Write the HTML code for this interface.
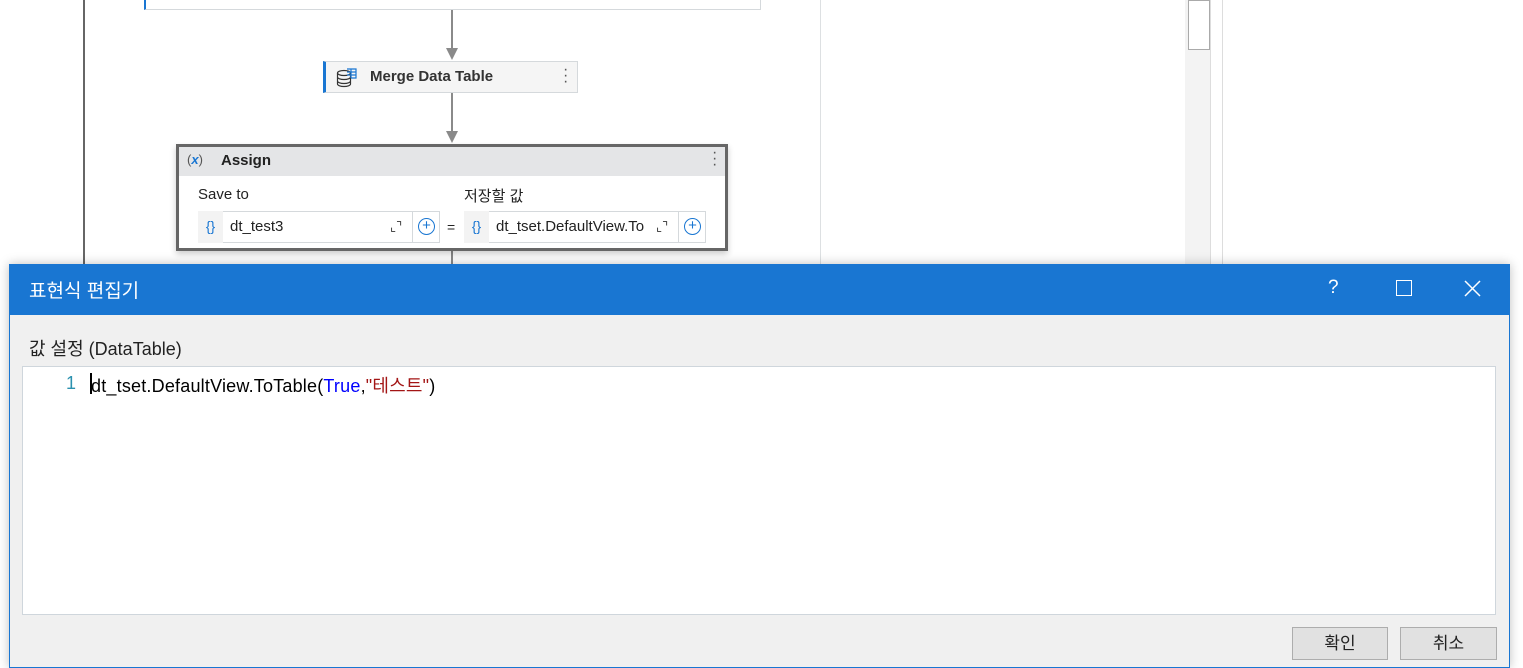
<!DOCTYPE html>
<html><head><meta charset="utf-8"><style>
*{box-sizing:border-box;margin:0;padding:0}
body{width:1523px;height:668px;position:relative;overflow:hidden;background:#fff;font-family:"Liberation Sans","Noto Sans CJK KR",sans-serif;color:#222}
.a{position:absolute}
</style></head><body>
<div class="a" style="left:83px;top:0;width:2px;height:668px;background:#666"></div>
<div class="a" style="left:144px;top:0;width:617px;height:10px;border:1px solid #d5d9dc;border-top:none;border-left:2px solid #1976d2;background:#fff"></div>
<div class="a" style="left:820px;top:0;width:1px;height:268px;background:#dde0e2"></div>
<div class="a" style="left:1185px;top:0;width:26px;height:268px;background:#f3f3f3;border-right:1px solid #ddd"></div>
<div class="a" style="left:1188px;top:0;width:22px;height:50px;background:#fff;border:1px solid #aaa"></div>
<div class="a" style="left:1222px;top:0;width:1px;height:268px;background:#ddd"></div>
<div class="a" style="left:451px;top:10px;width:2px;height:40px;background:#8a8a8a"></div>
<div class="a" style="left:446px;top:48px;width:0;height:0;border-left:6px solid transparent;border-right:6px solid transparent;border-top:12px solid #8a8a8a"></div>
<div class="a" style="left:451px;top:93px;width:2px;height:40px;background:#8a8a8a"></div>
<div class="a" style="left:446px;top:131px;width:0;height:0;border-left:6px solid transparent;border-right:6px solid transparent;border-top:12px solid #8a8a8a"></div>
<div class="a" style="left:451px;top:250px;width:2px;height:16px;background:#8a8a8a"></div>
<div class="a" style="left:323px;top:61px;width:255px;height:32px;background:#f5f5f5;border:1px solid #d5d9dc;border-left:3px solid #1976d2"></div>
<svg class="a" style="left:335px;top:67px" width="24" height="22" viewBox="0 0 24 22"><g fill="none" stroke="#333" stroke-width="1.2"><ellipse cx="9" cy="6" rx="6.5" ry="2.5"/><path d="M2.5 6v11c0 1.4 3 2.5 6.5 2.5s6.5-1.1 6.5-2.5V6M2.5 10c0 1.4 3 2.5 6.5 2.5s6.5-1.1 6.5-2.5M2.5 14c0 1.4 3 2.5 6.5 2.5s6.5-1.1 6.5-2.5"/><path d="M12 2h9v9h-5M12 5h9M12 8h9M16 2v9" stroke="#1976d2"/></g></svg>
<div class="a" style="left:370px;top:68px;font-size:15px;font-weight:bold;color:#333">Merge Data Table</div>
<div class="a" style="left:563px;top:67px;font-size:16px;line-height:6px;color:#555">·<br>·<br>·</div>
<div class="a" style="left:176px;top:144px;width:552px;height:107px;border:3px solid #666;background:#fff;box-shadow:0 3px 6px rgba(0,0,0,.2)"></div>
<div class="a" style="left:179px;top:147px;width:546px;height:29px;background:#e4e5e7"></div>
<div class="a" style="left:187px;top:152px;font-size:13px;color:#555">(<span style="color:#1976d2;font-style:italic;font-weight:bold">x</span>)</div>
<div class="a" style="left:221px;top:152px;font-size:15px;font-weight:bold;color:#222">Assign</div>
<div class="a" style="left:712px;top:150px;font-size:16px;line-height:6px;color:#555">·<br>·<br>·</div>
<div class="a" style="left:198px;top:186px;font-size:15px">Save to</div>
<div class="a" style="left:464px;top:185px;font-size:15px">저장할 값</div>
<div class="a" style="left:198px;top:211px;width:242px;height:32px;border:1px solid #d5d9dc;background:#fff"></div>
<div class="a" style="left:198px;top:211px;width:25px;height:32px;background:#f3f3f3;color:#1976d2;font-size:14px;line-height:30px;text-align:center">{}</div>
<div class="a" style="left:230px;top:218px;font-size:15px">dt_test3</div>
<div class="a" style="left:390px;top:219px;font-size:13px;color:#333">⌞⌝</div>
<div class="a" style="left:412px;top:211px;width:1px;height:32px;background:#d5d9dc"></div>
<div class="a" style="left:418px;top:218px;width:17px;height:17px;border:1.5px solid #1976d2;border-radius:50%;color:#1976d2;font-size:15px;line-height:14px;text-align:center">+</div>
<div class="a" style="left:447px;top:219px;font-size:14px">=</div>
<div class="a" style="left:464px;top:211px;width:242px;height:32px;border:1px solid #d5d9dc;background:#fff;overflow:hidden"></div>
<div class="a" style="left:464px;top:211px;width:25px;height:32px;background:#f3f3f3;color:#1976d2;font-size:14px;line-height:30px;text-align:center">{}</div>
<div class="a" style="left:496px;top:218px;width:148px;overflow:hidden;white-space:nowrap;font-size:15px">dt_tset.DefaultView.ToTable</div>
<div class="a" style="left:656px;top:219px;font-size:13px;color:#333">⌞⌝</div>
<div class="a" style="left:678px;top:211px;width:1px;height:32px;background:#d5d9dc"></div>
<div class="a" style="left:684px;top:218px;width:17px;height:17px;border:1.5px solid #1976d2;border-radius:50%;color:#1976d2;font-size:15px;line-height:14px;text-align:center">+</div>
<div class="a" style="left:9px;top:264px;width:1501px;height:404px;background:#f0f0f0;border:1px solid #1976d2;box-shadow:0 0 10px rgba(0,0,0,.25)"></div>
<div class="a" style="left:9px;top:264px;width:1501px;height:51px;background:#1976d2"></div>
<div class="a" style="left:29px;top:276px;font-size:19px;color:#fff">표현식 편집기</div>
<div class="a" style="left:1328px;top:277px;font-size:19px;color:#fff">?</div>
<div class="a" style="left:1396px;top:280px;width:16px;height:16px;border:1.5px solid #fff"></div>
<svg class="a" style="left:1464px;top:280px" width="17" height="17"><path d="M1 1L16 16M16 1L1 16" stroke="#fff" stroke-width="1.5"/></svg>
<div class="a" style="left:29px;top:335px;font-size:18px;color:#222">값 설정 (DataTable)</div>
<div class="a" style="left:22px;top:366px;width:1474px;height:249px;background:#fff;border:1px solid #cfd6dc"></div>
<div class="a" style="left:66px;top:373px;font-size:18px;color:#2b91af">1</div>
<div class="a" style="left:90px;top:373px;width:2px;height:21px;background:#000"></div>
<div class="a" style="left:91px;top:372px;font-size:18px;color:#000;white-space:nowrap;letter-spacing:0.2px">dt_tset.DefaultView.ToTable(<span style="color:#0000ff">True</span>,<span style="color:#a31515">"테스트"</span>)</div>
<div class="a" style="left:1292px;top:627px;width:96px;height:33px;border:1px solid #adadad;background:#e1e1e1;font-size:17px;text-align:center;line-height:31px">확인</div>
<div class="a" style="left:1400px;top:627px;width:97px;height:33px;border:1px solid #adadad;background:#e1e1e1;font-size:17px;text-align:center;line-height:31px">취소</div>
</body></html>
